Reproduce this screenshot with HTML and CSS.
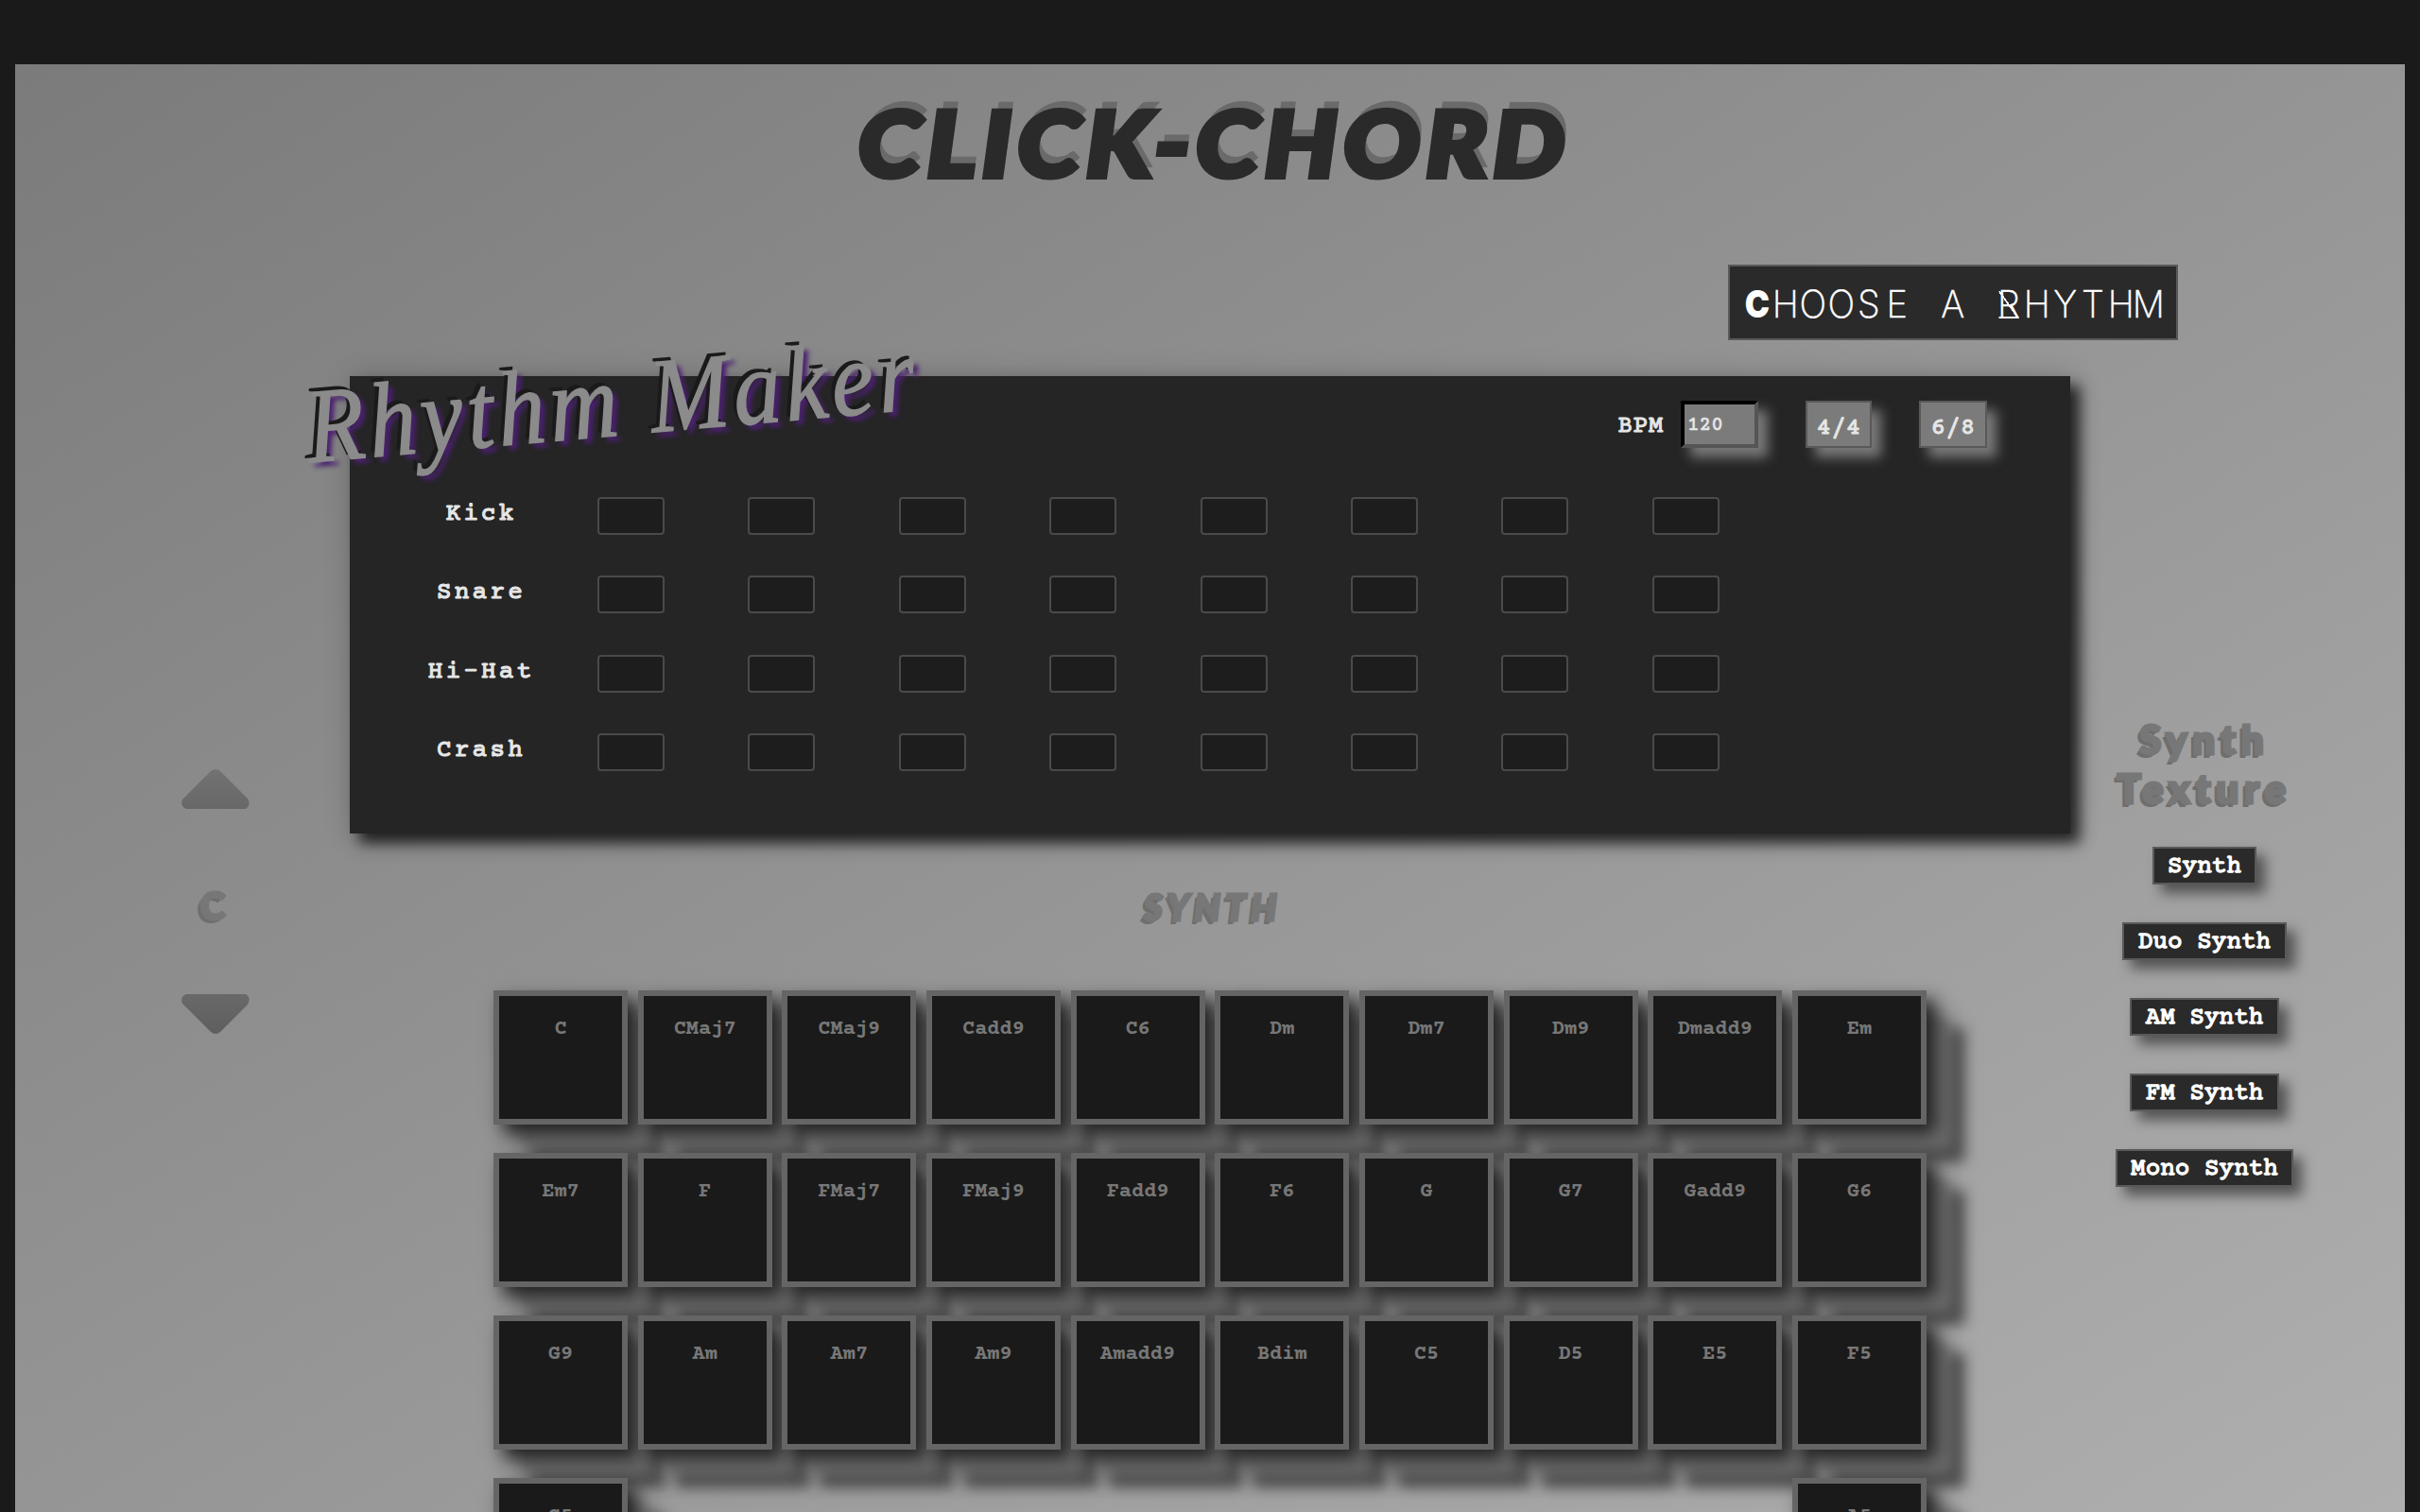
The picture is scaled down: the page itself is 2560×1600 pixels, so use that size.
FILE: index.html
```html
<!DOCTYPE html>
<html lang="en">
<head>
<meta charset="utf-8">
<title>Click-Chord</title>
<link rel="stylesheet" href="styles.css">
</head>
<body>
<div class="app">
  <h1 class="title">CLICK-CHORD</h1>
  <div class="chooser-row">
    <button class="chooser"><b>C</b><i>H</i><i>O</i><i>O</i><i>S</i><i>E</i><i> </i><i>A</i><i> </i><i class="fancy">R</i><i>H</i><i>Y</i><i>T</i><i>H</i><i>M</i></button>
  </div>
  <main class="main">
    <aside class="key-control">
      <svg class="arrow" viewBox="0 0 72 42"><defs><linearGradient id="up" x1="0" y1="0" x2="0" y2="1"><stop offset="0" stop-color="#727272"/><stop offset="1" stop-color="#686868"/></linearGradient></defs><path fill="url(#up)" d="M31 2Q36 -2 41 2L70 31Q74 37 68 42H5Q-2 39 1 32Z"/></svg>
      <div class="key-name">C</div>
      <svg class="arrow" viewBox="0 0 72 42"><defs><linearGradient id="down" x1="0" y1="0" x2="0" y2="1"><stop offset="0" stop-color="#696969"/><stop offset="1" stop-color="#5e5e5e"/></linearGradient></defs><path fill="url(#down)" d="M31 40Q36 44 41 40L70 11Q74 4 68 0H5Q-2 3 1 10Z"/></svg>
    </aside>
    <div class="center">
      <section class="panel">
        <h2 class="logo">Rhythm Maker</h2>
        <div class="toolbar">
          <span class="bpm">BPM</span>
          <div class="tempo">120</div>
          <button class="meter">4/4</button>
          <button class="meter wide">6/8</button>
        </div>
        <div class="tracks">
          <div class="track"><span>Kick</span><i></i><i></i><i></i><i></i><i></i><i></i><i></i><i></i></div>
          <div class="track"><span>Snare</span><i></i><i></i><i></i><i></i><i></i><i></i><i></i><i></i></div>
          <div class="track"><span>Hi-Hat</span><i></i><i></i><i></i><i></i><i></i><i></i><i></i><i></i></div>
          <div class="track"><span>Crash</span><i></i><i></i><i></i><i></i><i></i><i></i><i></i><i></i></div>
        </div>
      </section>
      <h3 class="synth-title">SYNTH</h3>
      <section class="chords">
        <div>C</div><div>CMaj7</div><div>CMaj9</div><div>Cadd9</div><div>C6</div><div>Dm</div><div>Dm7</div><div>Dm9</div><div>Dmadd9</div><div>Em</div>
        <div>Em7</div><div>F</div><div>FMaj7</div><div>FMaj9</div><div>Fadd9</div><div>F6</div><div>G</div><div>G7</div><div>Gadd9</div><div>G6</div>
        <div>G9</div><div>Am</div><div>Am7</div><div>Am9</div><div>Amadd9</div><div>Bdim</div><div>C5</div><div>D5</div><div>E5</div><div>F5</div>
        <div>G5</div><div class="last">A5</div>
      </section>
    </div>
    <aside class="textures">
      <h3 class="textures-title">Synth<br>Texture</h3>
      <button>Synth</button>
      <button>Duo Synth</button>
      <button>AM Synth</button>
      <button>FM Synth</button>
      <button>Mono Synth</button>
    </aside>
  </main>
</div>
</body>
</html>
```
FILE: styles.css
```css
* { box-sizing: border-box; }
html, body { height: 1600px; overflow: hidden; }
body {
  margin: 0;
  padding: 68px 16px 0;
  background: #1a1a1a;
  font-family: "Courier Prime", "Courier 10 Pitch", "FreeMono", "Liberation Mono", monospace;
  font-weight: 700;
}
h1, h2, h3 { margin: 0; }
i { font-style: normal; }
button { font: inherit; margin: 0; padding: 0; color: #fff; }

.app {
  height: 1532px;
  display: flex;
  flex-direction: column;
  overflow: hidden;
  background: linear-gradient(to bottom right, #7b7b7b, #afafaf);
}
.app > * { flex-shrink: 0; }
.title {
  align-self: center;
  height: 212px;
  padding-top: 22px;
  padding-left: 8px;
  font: italic 900 95px/120px Lato, sans-serif;
  letter-spacing: 6px;
  color: #2a2a2a;
  -webkit-text-stroke: 6px #2a2a2a;
  text-shadow: 0 1px 0 #666, 4px -10px 0 #6a6a6a;
  transform: scaleX(1.12);
}
.chooser-row {
  display: flex;
  justify-content: flex-end;
  padding-right: 240px;
  height: 118px;
}
.chooser {
  width: 476px;
  height: 80px;
  display: flex;
  justify-content: center;
  align-items: center;
  padding-top: 4px;
  background: #2a2a2a;
  border: 2px solid #595959;
  font: 200 40px/48px Inter, sans-serif;
}
.chooser b, .chooser i { width: 29.6px; display: flex; justify-content: center; white-space: pre; }
.chooser b { font-weight: 900; transform: scaleX(.88); }
.chooser i { transform: scaleX(.95); -webkit-text-stroke: .5px #fff; }
.chooser .fancy { position: relative; }
.fancy::before {
  content: "";
  position: absolute;
  left: 4px;
  top: 10px;
  width: 22px;
  height: 29px;
  background:
    linear-gradient(#fff, #fff) 0 100% / 100% 2px no-repeat,
    linear-gradient(to top right, transparent calc(50% - 1px), #fff calc(50% - .8px), #fff calc(50% + .8px), transparent calc(50% + 1px));
}

.main { display: grid; grid-template-columns: 354px 1820px 354px; }

.key-control {
  display: flex;
  flex-direction: column;
  align-items: center;
  padding: 416px 0 0 70px;
}
.arrow { width: 72px; height: 42px; display: block; }
.key-name {
  height: 196px;
  padding: 78px 6px 0 0;
  font: 900 40px/48px Lato, sans-serif;
}
.key-name, .synth-title, .textures-title {
  color: #777;
  -webkit-text-stroke: 3px #777;
  text-shadow: -1px 1px 0 #6e6e6e, -2px 2px 0 #6e6e6e, -4px 4px 0 #6e6e6e;
}

.panel {
  position: relative;
  height: 484px;
  padding-top: 26px;
  background: #252525;
  box-shadow: 10px 10px 14px rgba(0, 0, 0, .75), 2px 2px 30px rgba(0, 0, 0, .2);
}
.logo {
  position: absolute;
  left: -47px;
  top: -29px;
  white-space: nowrap;
  font: italic 400 100px/110px "Liberation Serif", serif;
  letter-spacing: 4.9px;
  color: #8b8b8b;
  -webkit-text-stroke: 1.5px #8b8b8b;
  text-shadow: -4px -4px 0 #1a1a1a, 5px 5px 5px #4b2170;
  transform: rotate(-5deg) scaleY(1.12);
}
.toolbar {
  height: 50px;
  display: flex;
  justify-content: flex-end;
  padding-right: 88px;
  font-size: 26px;
  font-weight: 400;
  color: #e6e6e6;
  -webkit-text-stroke: 1px #e6e6e6;
}
.bpm { line-height: 56px; letter-spacing: .6px; margin-right: 18px; }
.tempo {
  width: 82px;
  padding-left: 3px;
  margin-right: 50px;
  background: #7b7b7b;
  border: 4px solid #000;
  border-right-color: #555;
  border-bottom-color: #555;
  font-size: 21px;
  line-height: 46px;
  -webkit-text-stroke: .7px #e6e6e6;
}
.meter {
  width: 70px;
  margin-right: 50px;
  padding-top: 9px;
  background: #7b7b7b;
  border: 2px solid #595959;
  color: #e6e6e6;
}
.wide { width: 72px; margin-right: 0; }
.tempo, .meter { box-shadow: 10px 10px 12px #7a7a7a; }
.tracks { padding-top: 52px; display: flex; flex-direction: column; gap: 43.4px; }
.track { height: 40px; display: grid; grid-template-columns: 262px repeat(8, 159.4px); }
.track span {
  padding-left: 16px;
  text-align: center;
  font-size: 26px;
  font-weight: 400;
  letter-spacing: 3.2px;
  line-height: 37px;
  color: #e6e6e6;
  -webkit-text-stroke: 1.2px #e6e6e6;
}
.track i { width: 71px; background: #1d1d1d; border: 2px solid #4a4a4a; border-radius: 4px; }

.synth-title {
  height: 166px;
  padding-top: 53px;
  padding-left: 6px;
  text-align: center;
  font: italic 900 38px/48px Lato, sans-serif;
  letter-spacing: 5.5px;
}
.chords {
  display: grid;
  grid-template-columns: repeat(10, 142px);
  grid-auto-rows: 142px;
  justify-content: space-between;
  row-gap: 30px;
  padding: 0 152px;
}
.chords div {
  padding-top: 23px;
  text-align: center;
  font-size: 22px;
  line-height: 26px;
  color: #777;
  background: #1a1a1a;
  border: 6px solid #656565;
  box-shadow: 10px 10px 18px #222, 27px 27px 16px #707070, 40px 40px 14px #484848;
}
.chords .last { grid-column: 10; }

.textures {
  display: flex;
  flex-direction: column;
  align-items: center;
  padding: 358px 70px 0 0;
}
.textures-title {
  height: 140px;
  text-align: center;
  font: 900 42px/52px Lato, sans-serif;
  letter-spacing: 6px;
}
.textures button {
  height: 40px;
  margin-bottom: 40px;
  padding: 3px 14.5px 0;
  background: #2a2a2a;
  border: 2px solid #595959;
  font-size: 26px;
  font-weight: 400;
  line-height: 32px;
  -webkit-text-stroke: 1.3px #fff;
  box-shadow: 9px 9px 14px rgba(0, 0, 0, .5);
}
```
